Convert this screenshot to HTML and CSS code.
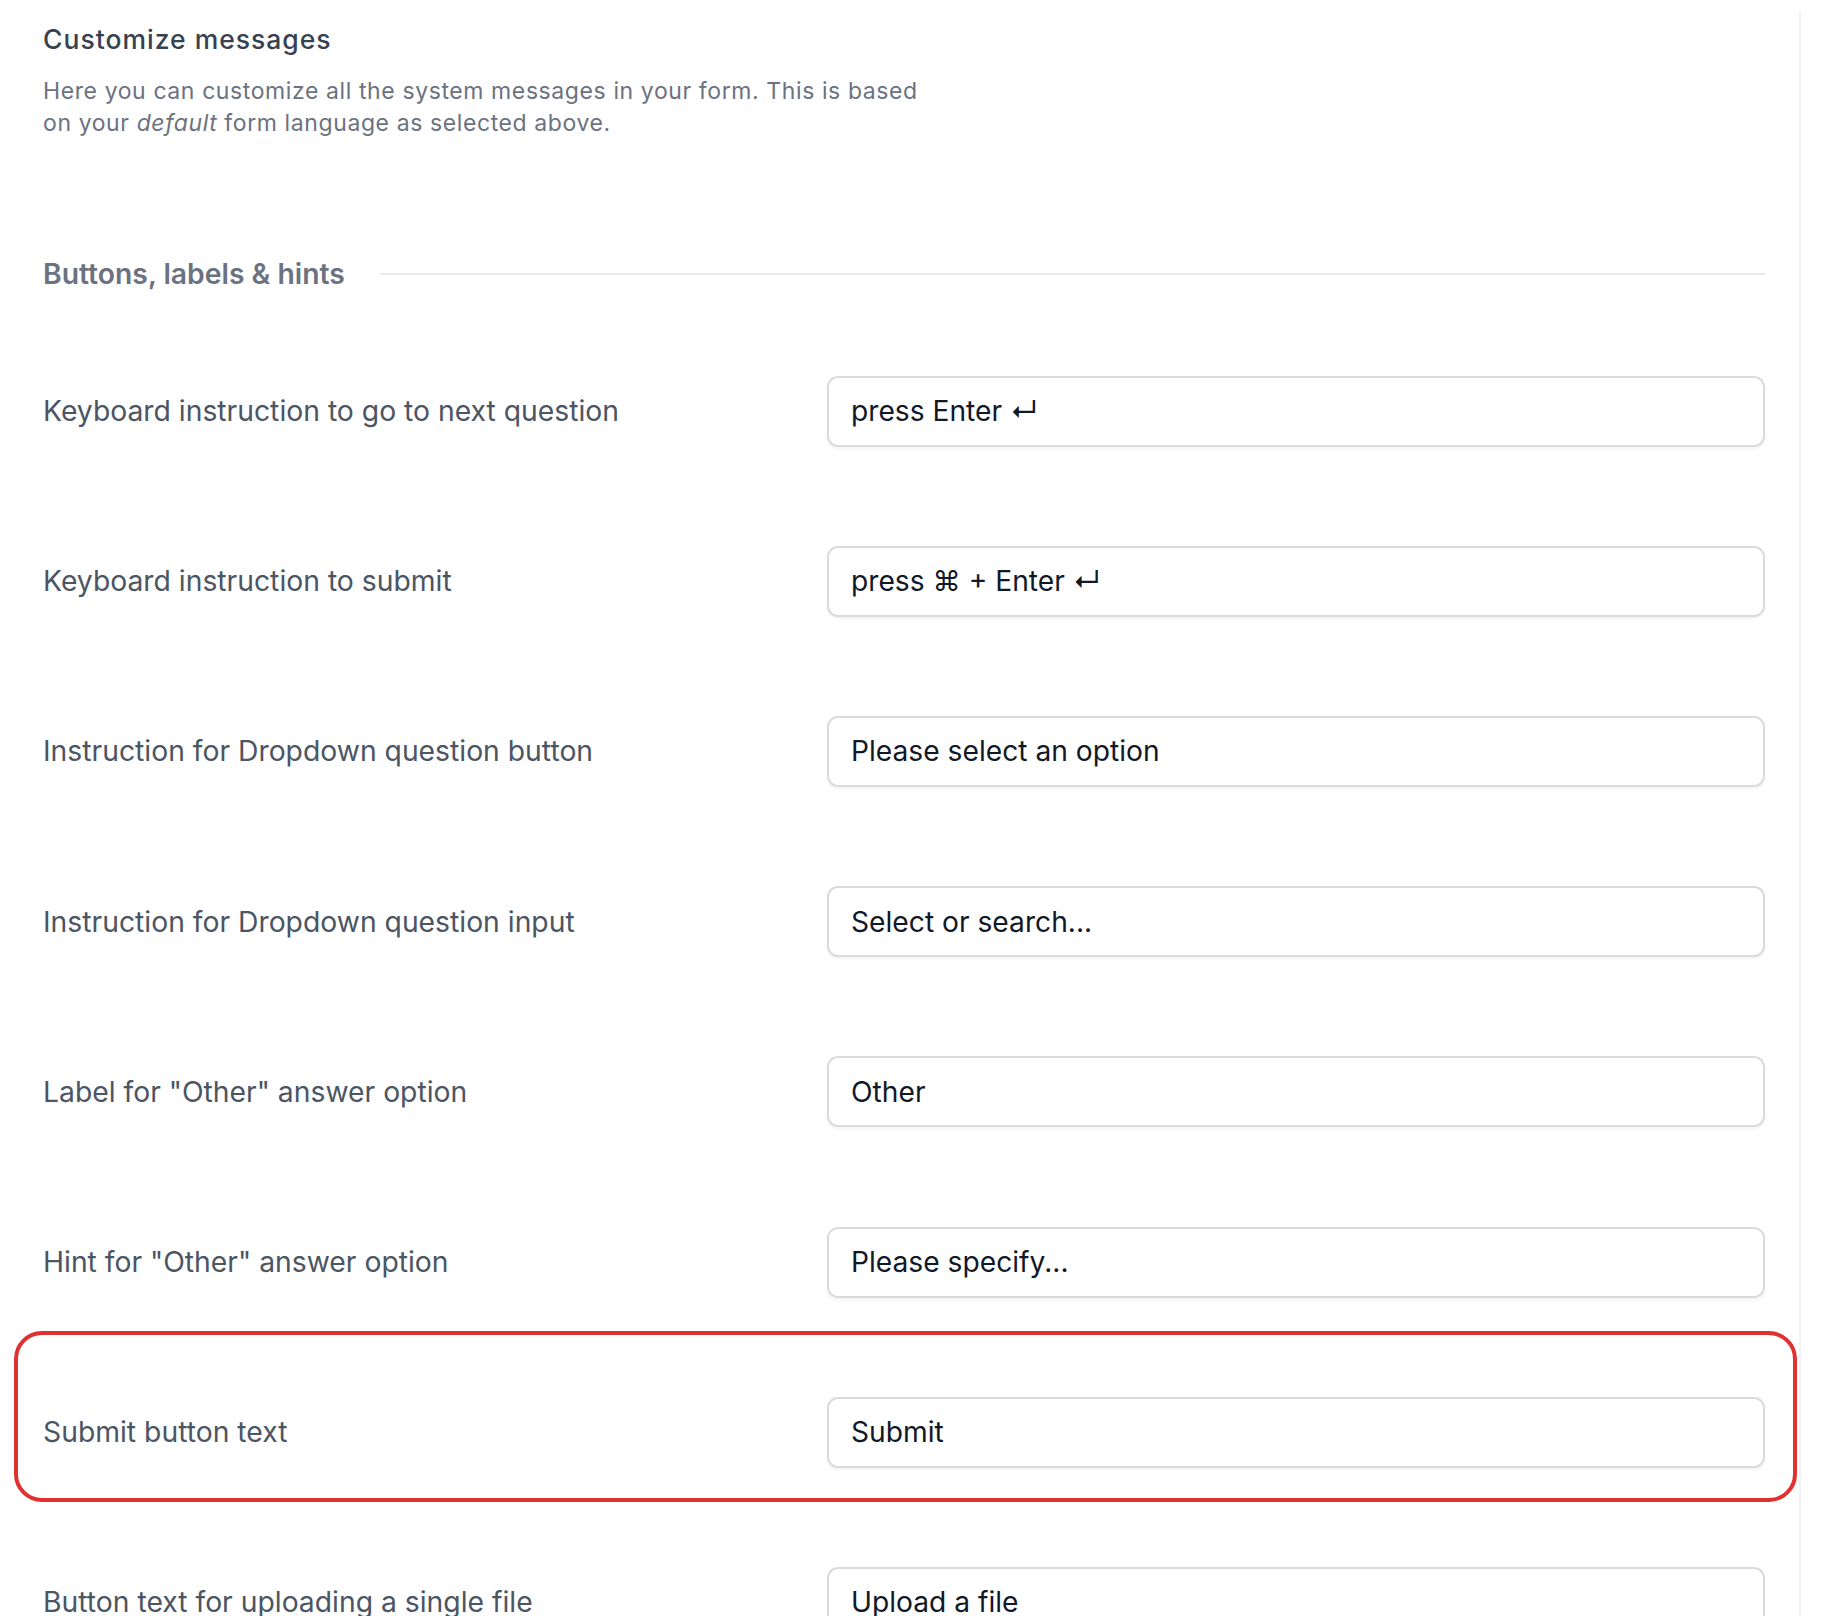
FILE: index.html
```html
<!DOCTYPE html>
<html>
<head>
    <title>Customize messages</title>
    <link rel="stylesheet" href="styles.css">
</head>
<body>
    <div class="panel">
        <h2 class="title">Customize messages</h2>
        <p class="intro">
            Here you can customize all the system messages in your form. This is based
            on your <em>default</em> form language as selected above.
        </p>

        <div class="section-head">
            <h3>Buttons, labels &amp; hints</h3>
            <span class="rule"></span>
        </div>

        <div class="fields">
            <div class="field">
                <label for="next">Keyboard instruction to go to next question</label>
                <input type="text" id="next" class="text-input" value="press Enter ↵">
            </div>
            <div class="field">
                <label for="submitKey">Keyboard instruction to submit</label>
                <input type="text" id="submitKey" class="text-input" value="press ⌘ + Enter ↵">
            </div>
            <div class="field">
                <label for="dropBtn">Instruction for Dropdown question button</label>
                <input type="text" id="dropBtn" class="text-input" value="Please select an option">
            </div>
            <div class="field">
                <label for="dropInput">Instruction for Dropdown question input</label>
                <input type="text" id="dropInput" class="text-input" value="Select or search...">
            </div>
            <div class="field">
                <label for="other">Label for "Other" answer option</label>
                <input type="text" id="other" class="text-input" value="Other">
            </div>
            <div class="field">
                <label for="otherHint">Hint for "Other" answer option</label>
                <input type="text" id="otherHint" class="text-input" value="Please specify...">
            </div>
            <div class="field highlight">
                <label for="submitText">Submit button text</label>
                <input type="text" id="submitText" class="text-input" value="Submit">
            </div>
            <div class="field">
                <label for="upload">Button text for uploading a single file</label>
                <input type="text" id="upload" class="text-input" value="Upload a file">
            </div>
            <div class="field">
                <label for="uploadMany">Button text for uploading multiple files</label>
                <input type="text" id="uploadMany" class="text-input" value="Upload files">
            </div>
        </div>
    </div>
</body>
</html>
```

FILE: styles.css
```css
html, body {
    height: 1616px;
    overflow: hidden;
}

body {
    margin: 0;
    background: #fff;
    font-family: Inter, "DejaVu Sans", sans-serif;
    color: #4b5563;
}

.panel {
    width: 1722px;
    margin-top: 10px;
    padding: 10.6px 34px 0 43px;
    border-right: 2px solid #f1f2f4;
    min-height: 1606px;
}

.title {
    margin: 0;
    font-size: 26.5px;
    line-height: 36px;
    font-weight: 500;
    letter-spacing: 1px;
    color: #374151;
}

.intro {
    margin: 18px 0 0;
    max-width: 900px;
    font-size: 23px;
    line-height: 32.7px;
    letter-spacing: 0.6px;
    color: #6b7280;
}

.section-head {
    display: flex;
    align-items: center;
    gap: 35px;
    margin-top: 113.6px;
}

.section-head h3 {
    margin: 0;
    font-size: 28.3px;
    line-height: 40px;
    font-weight: 600;
    color: #6b7280;
}

.rule {
    flex: 1;
    height: 2px;
    background: #e9eaee;
}

.fields {
    display: grid;
    row-gap: 99.2px;
    margin-top: 82px;
}

.field {
    display: grid;
    grid-template-columns: 784px 1fr;
    align-items: center;
    position: relative;
}

.field label {
    font-size: 28.3px;
    color: #4b5563;
}

.text-input {
    height: 71px;
    box-sizing: border-box;
    width: 100%;
    padding: 0 22px;
    border: 2px solid #d8dbe0;
    border-radius: 11px;
    box-shadow: 0 2px 3px rgba(0, 0, 0, 0.05);
    font-family: Inter, "DejaVu Sans", sans-serif;
    font-size: 28.2px;
    color: #111827;
    background: #fff;
}

.highlight::after {
    content: "";
    position: absolute;
    top: -66px;
    bottom: -34px;
    left: -29px;
    right: -32px;
    border: 4px solid #e03131;
    border-radius: 28px;
    pointer-events: none;
}
```
